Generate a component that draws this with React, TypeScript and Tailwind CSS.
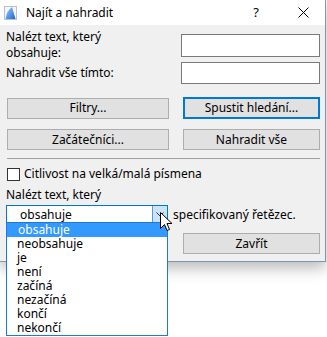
import React from 'react';

const options = ['obsahuje', 'neobsahuje', 'je', 'není', 'začíná', 'nezačíná', 'končí', 'nekončí'];

const Button: React.FC<{ label: string; primary?: boolean; className?: string }> = ({ label, primary, className = '' }) => (
  <div
    className={`flex items-center justify-center bg-[#e1e1e1] ${
      primary ? 'border-2 border-[#0078d7]' : 'border border-[#adadad]'
    } ${className}`}
  >
    {label}
  </div>
);

const App: React.FC = () => {
  return (
    <div className="relative w-[327px] h-[337px] overflow-hidden bg-white text-[12px] text-black font-['Noto_Sans','DejaVu_Sans',sans-serif]">
      {/* dialog window */}
      <div className="w-[326px] h-[262px] flex flex-col border-r border-b border-[#7a96b8] shadow-[0_6px_14px_rgba(0,0,0,0.28)]">
        {/* title bar */}
        <div className="h-[25px] bg-white flex items-center shrink-0">
          <svg width="13" height="14" viewBox="0 0 13 14" className="ml-[4px]">
            <defs>
              <linearGradient id="fin" x1="0" y1="0" x2="1" y2="1">
                <stop offset="0" stopColor="#9fd0ff" />
                <stop offset="1" stopColor="#1565d8" />
              </linearGradient>
            </defs>
            <rect x="0.5" y="0.5" width="12" height="13" fill="#f4f6f9" stroke="#b8c2cf" />
            <path d="M1.5 13 Q3 4 8 1 L11.5 13 Z" fill="url(#fin)" />
          </svg>
          <span className="ml-[9px] leading-none">Najít a nahradit</span>
          <span className="ml-auto mr-[39px] text-[13px] leading-none">?</span>
          <svg width="11" height="11" viewBox="0 0 11 11" className="mr-[16px]">
            <path d="M0.5 0.5 L10.5 10.5 M10.5 0.5 L0.5 10.5" stroke="#000" strokeWidth="1" />
          </svg>
        </div>

        {/* body */}
        <div className="flex-1 bg-[#f0f0f0] pl-[6px] pr-[5px] flex flex-col">
          <div className="mt-[4px] flex justify-between items-start">
            <div className="leading-[16px]">
              <div>Nalézt text, který</div>
              <div>obsahuje:</div>
            </div>
            <div className="mt-[5px] w-[139px] h-[23px] bg-white border border-[#7a7a7a]" />
          </div>
          <div className="mt-[1px] h-[22px] flex justify-between items-center">
            <span className="leading-[16px]">Nahradit vše tímto:</span>
            <div className="w-[139px] h-[22px] bg-white border border-[#7a7a7a]" />
          </div>

          <div className="mt-[13px] flex justify-between items-center">
            <Button label="Filtry..." className="ml-[1px] w-[162px] h-[21px]" />
            <Button label="Spustit hledání..." primary className="w-[137px] h-[22px]" />
          </div>
          <div className="mt-[10px] flex justify-between">
            <Button label="Začátečníci..." className="ml-[1px] w-[162px] h-[21px]" />
            <Button label="Nahradit vše" className="w-[137px] h-[21px]" />
          </div>

          <div className="mt-[8px] ml-[1px] h-px bg-[#a0a0a0]" />

          <div className="mt-[7px] flex items-center">
            <div className="ml-[1px] w-[13px] h-[13px] bg-white border border-[#333333]" />
            <span className="ml-[4px] leading-[16px]">Citlivost na velká/malá písmena</span>
          </div>

          <div className="mt-[5px] leading-[16px]">Nalézt text, který</div>

          <div className="mt-[2px] flex items-center">
            <div className="w-[162px] h-[19px] bg-white border border-[#0078d7] flex items-center">
              <span className="pl-[13px] flex-1 leading-none">obsahuje</span>
              <div className="w-[15px] h-full bg-[#cce4f7] border-l border-[#569de5] flex items-center justify-center">
                <svg width="8" height="5" viewBox="0 0 8 5">
                  <path d="M0.5 0.5 L4 4 L7.5 0.5" fill="none" stroke="#333" strokeWidth="1" />
                </svg>
              </div>
            </div>
            <span className="ml-[5px] leading-none">specifikovaný řetězec.</span>
          </div>

          <div className="mt-[9px] flex justify-end">
            <Button label="Zavřít" className="w-[137px] h-[21px]" />
          </div>
        </div>
      </div>

      {/* open dropdown list */}
      <div className="absolute left-[6px] top-[222px] w-[162px] h-[114px] bg-white border border-[#1c7ad9]">
        {options.map((o, i) => (
          <div
            key={o}
            className={`h-[14px] leading-[14px] ${
              i === 0 ? 'bg-[#3399ff] text-white pl-[11px]' : 'pl-[10px]'
            }`}
          >
            {o}
          </div>
        ))}
      </div>

      {/* mouse pointer */}
      <svg className="absolute left-[160px] top-[212px]" width="13" height="20" viewBox="0 0 13 20">
        <path
          d="M0.5 0.5 L0.5 16.5 L4.5 12.5 L7 18.5 L9.5 17.5 L7 11.5 L12 11.5 Z"
          fill="#fff"
          stroke="#000"
          strokeWidth="1"
          strokeLinejoin="miter"
        />
      </svg>
    </div>
  );
};

export default App;
